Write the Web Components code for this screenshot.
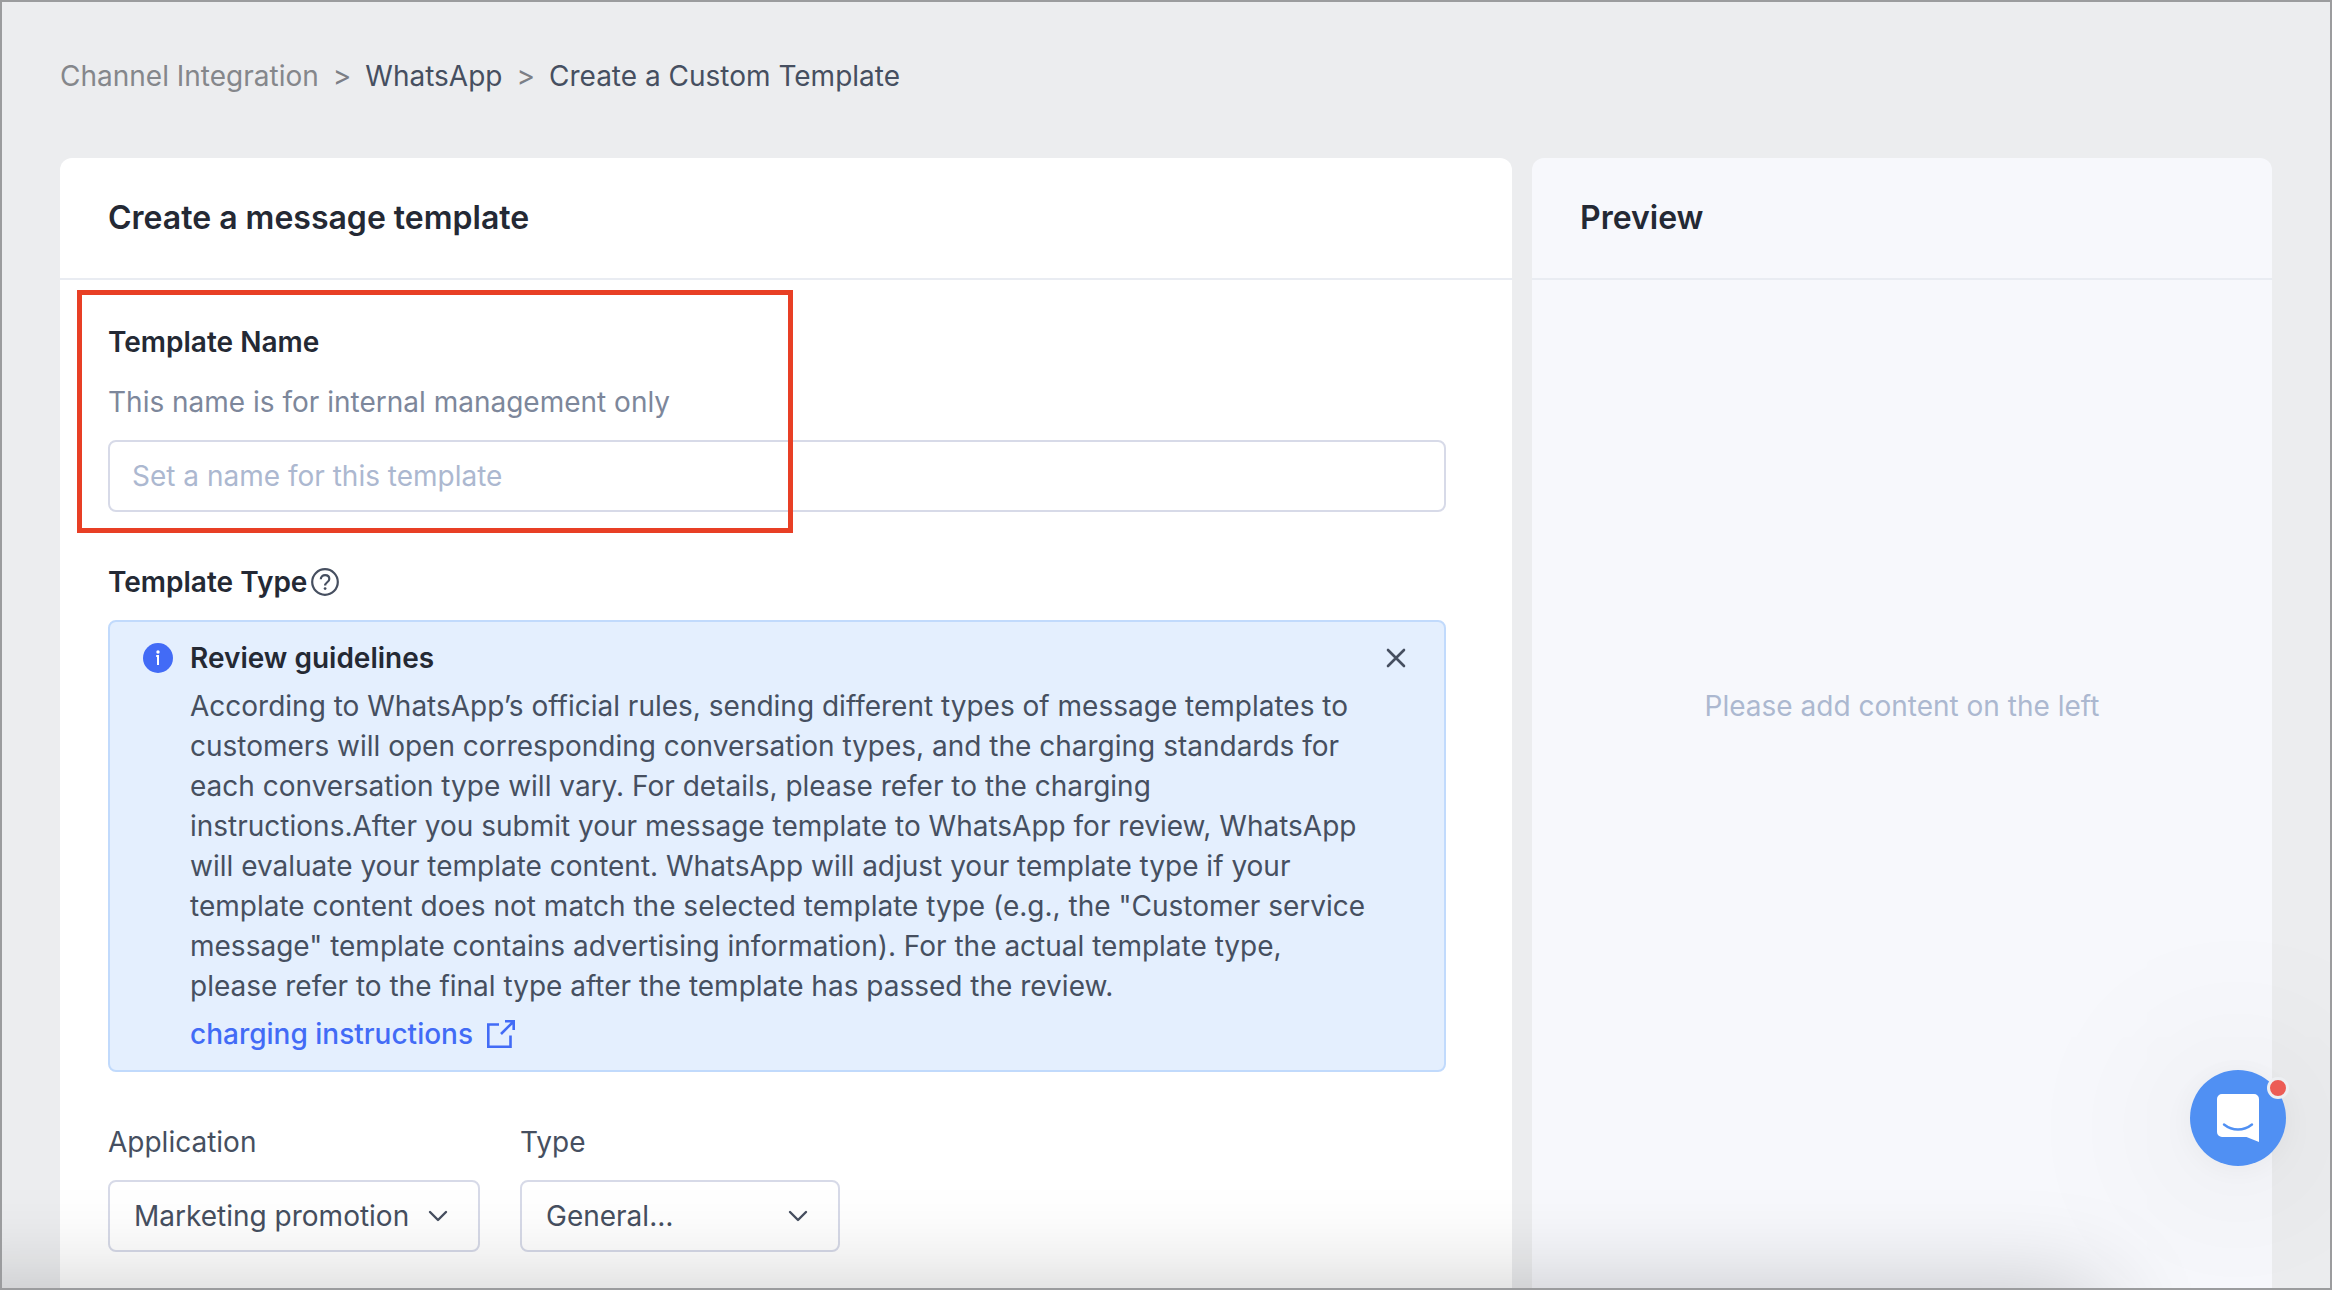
<!DOCTYPE html>
<html lang="en">
<head>
<meta charset="utf-8">
<meta name="viewport" content="width=device-width, initial-scale=1">
<title>Create a Custom Template</title>
<style>
  html {
    --ink: #242934;
    --text: #464f60;
    --muted: #7d879b;
    --placeholder: #acb8d0;
    --line: #d7dae8;
    --blue: #426bf6;
  }
  body {
    margin: 0;
    background: #ecedef;
    color: var(--text);
    font: 28px/40px Inter, "Noto Sans", sans-serif;
  }
</style>
</head>
<body>
<template-page></template-page>

<script>
function define(name, html, setup) {
  customElements.define(
    name,
    class extends HTMLElement {
      constructor() {
        super();
        this.attachShadow({ mode: "open" });
        this.shadowRoot.innerHTML = html;
      }

      connectedCallback() {
        if (setup) {
          setup(this, this.shadowRoot);
        }
      }
    }
  );
}

define("bread-crumb", `
  <style>
    :host { display: block; }
    nav { display: flex; gap: 14px; }
    nav span { color: #7c7f86; }
    ::slotted(a) { color: inherit; text-decoration: none; }
    ::slotted(a[slot="root"]) { color: #85878b; }
  </style>
  <nav aria-label="Breadcrumb">
    <slot name="root"></slot><span>&gt;</span>
    <slot name="parent"></slot><span>&gt;</span>
    <slot></slot>
  </nav>`);

define("panel-card", `
  <style>
    :host {
      display: flex;
      flex-direction: column;
      background: var(--panel, #fff);
      border-radius: 12px 12px 0 0;
    }
    header { padding: 40px 48px; border-bottom: 2px solid #e9ecf2; }
    h2 { margin: 0; font-size: 32px; line-height: 40px; font-weight: 600; color: var(--ink); }
  </style>
  <header><h2><slot name="title"></slot></h2></header>
  <slot></slot>`);

define("text-field", `
  <style>
    :host { display: grid; position: relative; }
    label { font-weight: 600; color: var(--ink); justify-self: start; }
    p { margin: 20px 0 18px; color: var(--muted); }
    input {
      box-sizing: border-box;
      width: 100%;
      height: 72px;
      padding: 0 22px;
      border: 2px solid var(--line);
      border-radius: 8px;
      background: none;
      color: var(--text);
      font: inherit;
    }
    input::placeholder { color: var(--placeholder); opacity: 1; }
    .mark {
      position: absolute;
      inset: -32px auto -21px -31px;
      width: 706px;
      border: 5px solid #e83f25;
      pointer-events: none;
    }
  </style>
  <label for="field"></label>
  <p id="hint"><slot></slot></p>
  <input id="field" type="text" aria-describedby="hint">
  <div class="mark"></div>`,
  (host, root) => {
    root.querySelector("label").textContent = host.getAttribute("label");
    root.querySelector("input").placeholder = host.getAttribute("placeholder");
  });

define("select-field", `
  <style>
    :host { display: grid; gap: 18px; }
    label { justify-self: start; }
    .box { display: grid; align-items: center; }
    select, svg { grid-area: 1 / 1; }
    select {
      appearance: none;
      width: 100%;
      height: 72px;
      padding: 0 64px 0 24px;
      border: 2px solid var(--line);
      border-radius: 8px;
      background: none;
      color: inherit;
      font: inherit;
    }
    svg { justify-self: end; margin-right: 32px; pointer-events: none; }
  </style>
  <label for="choice"></label>
  <div class="box">
    <select id="choice"><option></option></select>
    <svg width="20" height="20" viewBox="0 0 20 20" fill="none" stroke="currentColor" stroke-width="2.4" stroke-linecap="round" stroke-linejoin="round"><path d="M2 6l8 8 8-8"/></svg>
  </div>`,
  (host, root) => {
    root.querySelector("label").textContent = host.getAttribute("label");
    root.querySelector("option").textContent = host.getAttribute("value");
  });

define("info-alert", `
  <style>
    :host {
      display: grid;
      grid-template-columns: 40px minmax(0, 1fr) 32px;
      gap: 8px;
      padding: 16px 32px;
      background: #e4effe;
      border: 2px solid #c1dafc;
      border-radius: 8px;
    }
    svg { display: block; }
    .icon, button { align-self: center; }
    h3 { margin: 0; font: inherit; font-weight: 600; color: var(--ink); }
    p, .action { grid-column: 2; margin: 0; }
    button { padding: 0; border: 0; background: none; color: inherit; }
  </style>
  <svg class="icon" width="32" height="32" viewBox="0 0 32 32">
    <circle cx="16" cy="16" r="15" fill="#426bf6"/>
    <circle cx="16" cy="10" r="1.7" fill="#fff"/>
    <path d="M14.2 14H16v9" fill="none" stroke="#fff" stroke-width="2"/>
  </svg>
  <h3><slot name="title"></slot></h3>
  <button type="button" aria-label="Close">
    <svg width="32" height="32" viewBox="0 0 32 32" fill="none" stroke="currentColor" stroke-width="2.6" stroke-linecap="round"><path d="M8 8l16 16M24 8L8 24"/></svg>
  </button>
  <p><slot></slot></p>
  <div class="action"><slot name="action"></slot></div>`,
  (host, root) => {
    root.querySelector("button").addEventListener("click", () => host.remove());
  });

define("external-link", `
  <style>
    :host { display: inline-block; }
    a { display: flex; align-items: center; gap: 12px; color: var(--blue); font-weight: 500; text-decoration: none; }
  </style>
  <a href="#charging">
    <slot></slot>
    <svg width="32" height="32" viewBox="0 0 32 32" fill="none" stroke="currentColor" stroke-width="2.6"><path d="M14 6.5H3.3v22.2h22.2V17.5M16 16L28.5 3.5M20 3.3h8.7V12"/></svg>
  </a>`);

define("help-tip", `
  <style>
    :host { display: inline-flex; }
    button { padding: 0; border: 0; background: none; color: inherit; }
    svg { display: block; }
  </style>
  <button type="button" aria-label="About template types">
    <svg width="28" height="28" viewBox="0 0 28 28" fill="none" stroke="currentColor" stroke-width="2.2">
      <circle cx="14" cy="14" r="12.8"/>
      <path d="M9.8 11.2c0-2.5 1.9-4.1 4.3-4.1s4.200 1.5 4.200 3.800c0 3.400-4.200 3.300-4.200 6.700"/>
      <circle cx="14.1" cy="20.6" r="1.4" fill="currentColor" stroke="none"/>
    </svg>
  </button>`);

define("chat-launcher", `
  <style>
    :host { position: fixed; right: 46px; bottom: 124px; }
    button {
      display: grid;
      place-items: center;
      width: 96px;
      height: 96px;
      padding: 0;
      border: 0;
      border-radius: 50%;
      background: #5090f3;
      box-shadow: 0 4px 32px rgba(0, 0, 0, .05), 0 10px 180px 28px rgba(0, 0, 0, .08);
    }
    .dot {
      position: absolute;
      top: 7px;
      right: -3px;
      width: 16px;
      height: 16px;
      border: 3px solid #edeff2;
      border-radius: 50%;
      background: #ec5c55;
    }
  </style>
  <button type="button" aria-label="Open chat">
    <svg width="42" height="48" viewBox="0 0 42 48">
      <path d="M5 0h32a5 5 0 0 1 5 5v43l-12.5-5H5a5 5 0 0 1-5-5V5a5 5 0 0 1 5-5z" fill="#fff"/>
      <path d="M7 30.5c8.5 6.700 19.500 6.700 28 0" fill="none" stroke="#5090f3" stroke-width="2.4" stroke-linecap="round"/>
    </svg>
  </button>
  <span class="dot"></span>`);

define("template-page", `
  <style>
    :host {
      display: flex;
      flex-direction: column;
      box-sizing: border-box;
      min-height: 100vh;
      padding: 56px 60px 0;
    }
    main {
      flex: 1;
      display: grid;
      grid-template-columns: 1452fr 740fr;
      gap: 20px;
      margin-top: 62px;
    }
    .preview { --panel: #f7f8fc; }
    form { padding: 42px 66px 36px 48px; }
    .type-label {
      display: flex;
      align-items: center;
      gap: 4px;
      margin: 50px 0 18px;
    }
    h3 { margin: 0; font: inherit; font-weight: 600; color: var(--ink); }
    .selects { display: flex; gap: 40px; margin-top: 50px; }
    .application { width: 372px; }
    .type { width: 320px; }
    .empty { margin: 0; padding-top: 406px; text-align: center; color: var(--placeholder); }
    /* soft shadow rising from the bottom edge */
    .fade {
      position: fixed;
      left: -100px;
      right: 230px;
      bottom: -100px;
      height: 100px;
      box-shadow: 0 0 100px rgba(0, 0, 0, .22);
      pointer-events: none;
    }
    .frame { position: fixed; inset: 0; border: 2px solid #9b9c9e; pointer-events: none; }
  </style>
  <bread-crumb>
    <a slot="root" href="#channels">Channel Integration</a>
    <a slot="parent" href="#whatsapp">WhatsApp</a>
    <span>Create a Custom Template</span>
  </bread-crumb>
  <main>
    <panel-card>
      <span slot="title">Create a message template</span>
      <form>
        <text-field label="Template Name" placeholder="Set a name for this template">This name is for internal management only</text-field>
        <div class="type-label"><h3>Template Type</h3><help-tip></help-tip></div>
        <info-alert>
          <span slot="title">Review guidelines</span>
          According to WhatsApp’s official rules, sending different types of message templates to customers will open corresponding conversation types, and the charging standards for each conversation type will vary. For details, please refer to the charging instructions.After you submit your message template to WhatsApp for review, WhatsApp will evaluate your template content. WhatsApp will adjust your template type if your template content does not match the selected template type (e.g., the "Customer service message" template contains advertising information). For the actual template type, please refer to the final type after the template has passed the review.
          <external-link slot="action">charging instructions</external-link>
        </info-alert>
        <div class="selects">
          <select-field class="application" label="Application" value="Marketing promotion"></select-field>
          <select-field class="type" label="Type" value="General…"></select-field>
        </div>
      </form>
    </panel-card>
    <panel-card class="preview">
      <span slot="title">Preview</span>
      <p class="empty">Please add content on the left</p>
    </panel-card>
  </main>
  <div class="fade"></div>
  <chat-launcher></chat-launcher>
  <div class="frame"></div>`);
</script>
</body>
</html>
